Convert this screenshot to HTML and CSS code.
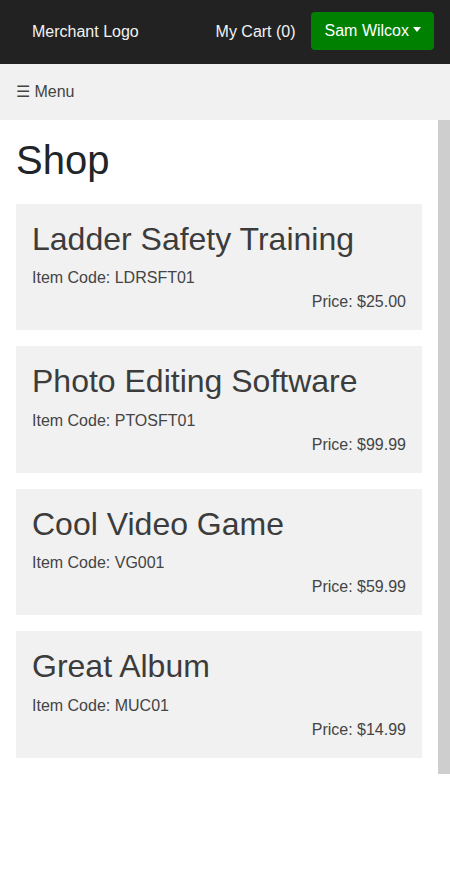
FILE: index.html
```html
<!DOCTYPE html>
<html>
<head>
<meta charset="utf-8">
<link rel="stylesheet" href="styles.css">
</head>
<body>
<header class="topbar">
  <span class="logo">Merchant Logo</span>
  <div class="top-right">
    <span class="cart">My Cart (0)</span>
    <button class="user-btn">Sam Wilcox<span class="caret"></span></button>
  </div>
</header>
<nav class="menubar"><span class="menu">☰ Menu</span></nav>
<div class="layout">
  <main class="main">
    <h1 class="page-title">Shop</h1>
    <div class="card">
      <h2 class="card-title">Ladder Safety Training</h2>
      <div class="code">Item Code: LDRSFT01</div>
      <div class="price">Price: $25.00</div>
    </div>
    <div class="card">
      <h2 class="card-title">Photo Editing Software</h2>
      <div class="code">Item Code: PTOSFT01</div>
      <div class="price">Price: $99.99</div>
    </div>
    <div class="card">
      <h2 class="card-title">Cool Video Game</h2>
      <div class="code">Item Code: VG001</div>
      <div class="price">Price: $59.99</div>
    </div>
    <div class="card">
      <h2 class="card-title">Great Album</h2>
      <div class="code">Item Code: MUC01</div>
      <div class="price">Price: $14.99</div>
    </div>
  </main>
  <aside class="side"></aside>
</div>
</body>
</html>
```
FILE: styles.css
```css
* { box-sizing: border-box; }
body {
  margin: 0;
  font-family: "Liberation Sans", Arial, sans-serif;
  font-size: 16px;
  line-height: 1.5;
  color: #212529;
  background: #fff;
}
.topbar {
  height: 64px;
  background: #222;
  display: flex;
  align-items: center;
  justify-content: space-between;
  padding: 0 16px 0 32px;
  color: #f2f2f2;
}
.top-right {
  display: flex;
  align-items: center;
  gap: 15px;
}
.cart { color: #f2f2f2; }
.user-btn {
  font-family: inherit;
  font-size: 16px;
  line-height: 24px;
  color: #fff;
  background: #008000;
  border: 0;
  border-radius: 4px;
  padding: 7px 13px 7px 14px;
  height: 38px;
  margin-top: -2px;
  display: flex;
  align-items: center;
}
.caret {
  display: inline-block;
  margin-left: 4px;
  margin-top: -3px;
  border-top: 5px solid #fff;
  border-left: 4px solid transparent;
  border-right: 4px solid transparent;
}
.menubar {
  height: 56px;
  background: #f1f1f1;
  display: flex;
  align-items: center;
  padding: 0 16px;
  color: #444;
}
.layout {
  display: flex;
  align-items: stretch;
}
.main {
  width: 438px;
  padding: 16px;
}
.side {
  width: 12px;
  background: #cecece;
}
.page-title {
  margin: 0 0 20px;
  font-size: 40px;
  font-weight: 400;
  line-height: 48px;
  color: #212529;
}
.card {
  background: #f1f1f1;
  padding: 16px;
  margin-bottom: 16px;
  color: #444;
}
.card:last-child { margin-bottom: 0; }
.card-title {
  margin: 0 0 8px;
  font-size: 32px;
  font-weight: 400;
  line-height: 38.4px;
  color: #3c3c3c;
}
.code { line-height: 24px; }
.price { text-align: right; line-height: 24px; }
```
